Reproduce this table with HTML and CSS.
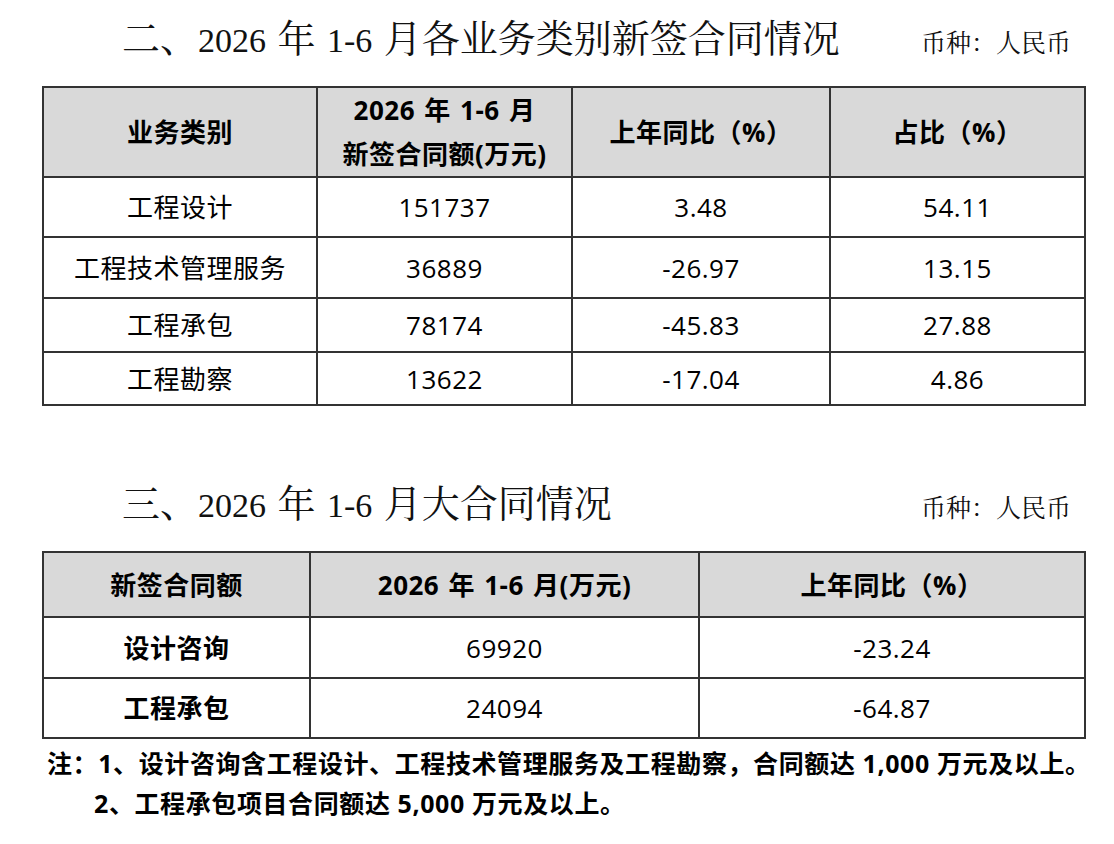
FILE: index.html
```html
<!DOCTYPE html>
<html lang="zh-CN">
<head>
<meta charset="utf-8">
<title>2026年1-6月新签合同情况</title>
<link rel="stylesheet" href="styles.css">
</head>
<body>
<div class="page">
  <div class="sec-head">
    <h2 class="sec-title">二、<span class="num">2026</span> 年 <span class="num">1-6</span> 月各业务类别新签合同情况</h2>
    <span class="currency">币种：人民币</span>
  </div>
  <table class="tbl t1">
    <colgroup><col class="c1"><col class="c2"><col class="c3"><col class="c4"></colgroup>
    <thead>
      <tr class="r-h">
        <th>业务类别</th>
        <th class="two-line">2026 年 1-6 月<br>新签合同额(万元)</th>
        <th>上年同比（%）</th>
        <th>占比（%）</th>
      </tr>
    </thead>
    <tbody>
      <tr class="r-a"><td>工程设计</td><td>151737</td><td>3.48</td><td>54.11</td></tr>
      <tr class="r-b"><td>工程技术管理服务</td><td>36889</td><td>-26.97</td><td>13.15</td></tr>
      <tr class="r-c"><td>工程承包</td><td>78174</td><td>-45.83</td><td>27.88</td></tr>
      <tr class="r-d"><td>工程勘察</td><td>13622</td><td>-17.04</td><td>4.86</td></tr>
    </tbody>
  </table>

  <div class="sec-head sec-2">
    <h2 class="sec-title">三、<span class="num">2026</span> 年 <span class="num">1-6</span> 月大合同情况</h2>
    <span class="currency">币种：人民币</span>
  </div>
  <table class="tbl t2">
    <colgroup><col class="d1"><col class="d2"><col class="d3"></colgroup>
    <thead>
      <tr class="r-h2">
        <th>新签合同额</th>
        <th>2026 年 1-6 月(万元)</th>
        <th>上年同比（%）</th>
      </tr>
    </thead>
    <tbody>
      <tr class="r-e"><td class="strong">设计咨询</td><td>69920</td><td>-23.24</td></tr>
      <tr class="r-f"><td class="strong">工程承包</td><td>24094</td><td>-64.87</td></tr>
    </tbody>
  </table>

  <div class="notes">
    <p class="note">注：1、设计咨询含工程设计、工程技术管理服务及工程勘察，合同额达 1,000 万元及以上。</p>
    <p class="note note-2">2、工程承包项目合同额达 5,000 万元及以上。</p>
  </div>
</div>
</body>
</html>
```

FILE: styles.css
```css
html, body {
  margin: 0;
  padding: 0;
  background: #ffffff;
}

.page {
  width: 1114px;
  height: 844px;
  overflow: hidden;
  color: #000;
  font-family: "Open Sans", "Noto Sans CJK SC", sans-serif;
}

.sec-head {
  display: flex;
  align-items: baseline;
  justify-content: space-between;
  box-sizing: border-box;
  height: 86px;
  padding: 14px 43px 0 122px;
}

.sec-2 {
  margin-top: 59px;
}

.sec-title {
  margin: 0;
  font-family: "Liberation Serif", "Noto Serif CJK SC", "Noto Sans CJK SC", serif;
  font-size: 38px;
  font-weight: 400;
  line-height: 50px;
  word-spacing: 2px;
  color: #111;
}

.sec-title .num {
  font-size: 34px;
}

.currency {
  font-family: "Liberation Serif", "Noto Serif CJK SC", "Noto Sans CJK SC", serif;
  font-size: 25px;
  font-weight: 400;
  color: #111;
}

.tbl {
  margin-left: 42px;
  width: 1042px;
  border-collapse: collapse;
  table-layout: fixed;
  font-size: 26px;
  letter-spacing: 0.5px;
}

.tbl th,
.tbl td {
  border: 2px solid #333;
  padding: 0;
  text-align: center;
  vertical-align: middle;
  line-height: 34px;
}

.tbl th {
  background: #d9d9d9;
  font-weight: 700;
  word-spacing: 2px;
}

.tbl td {
  font-weight: 400;
}

.tbl td.strong {
  font-weight: 700;
}

.two-line {
  line-height: 44px !important;
}

.t1 .c1 { width: 274px; }
.t1 .c2 { width: 255px; }
.t1 .c3 { width: 258px; }
.t1 .c4 { width: 255px; }

.t2 .d1 { width: 267px; }
.t2 .d2 { width: 389px; }
.t2 .d3 { width: 386px; }

.r-h th { height: 88px; }
.r-a td { height: 58px; }
.r-b td { height: 59px; }
.r-c td { height: 52px; }
.r-d td { height: 51px; }

.r-h2 th { height: 63px; }
.r-e td { height: 59px; }
.r-f td { height: 58px; }

.notes {
  margin-top: 4px;
  padding-left: 47px;
}

.note {
  margin: 0;
  font-size: 25px;
  font-weight: 700;
  line-height: 40px;
  letter-spacing: 0.6px;
  white-space: nowrap;
}

.note-2 {
  padding-left: 47px;
}
```
